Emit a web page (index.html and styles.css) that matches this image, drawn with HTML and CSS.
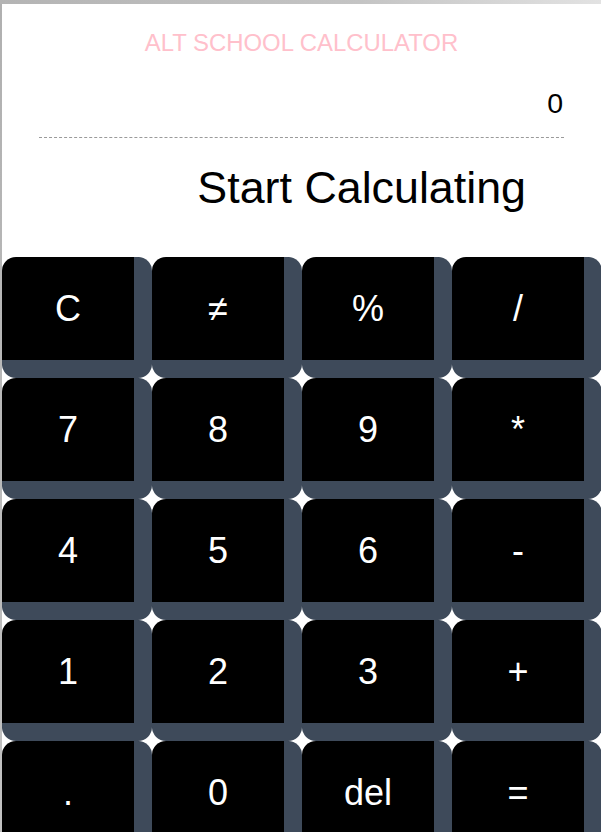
FILE: index.html
```html
<!DOCTYPE html>
<html lang="en">
<head>
<meta charset="utf-8">
<title>Alt School Calculator</title>
<link rel="stylesheet" href="styles.css">
</head>
<body>
<div class="page">
  <h1 class="title">ALT SCHOOL CALCULATOR</h1>
  <div class="display">
    <div class="value">0</div>
  </div>
  <div class="result">Start Calculating</div>
  <div class="keys">
    <button class="key">C</button>
    <button class="key">≠</button>
    <button class="key">%</button>
    <button class="key">/</button>
    <button class="key">7</button>
    <button class="key">8</button>
    <button class="key">9</button>
    <button class="key">*</button>
    <button class="key">4</button>
    <button class="key">5</button>
    <button class="key">6</button>
    <button class="key">-</button>
    <button class="key">1</button>
    <button class="key">2</button>
    <button class="key">3</button>
    <button class="key">+</button>
    <button class="key">.</button>
    <button class="key">0</button>
    <button class="key">del</button>
    <button class="key">=</button>
  </div>
</div>
</body>
</html>
```
FILE: styles.css
```css
html, body {
  margin: 0;
  padding: 0;
  overflow: hidden;
}
body {
  background:
    linear-gradient(to right, #b4b4b4, #c4c4c4 60%, #e2e2e2) top left / 100% 4px no-repeat,
    linear-gradient(to bottom, #b0b0b0, #c2c2c2) left top / 2px 100% no-repeat,
    #ffffff;
  font-family: "Liberation Sans", Arial, sans-serif;
  height: 832px;
}
.page {
  margin: 4px 0 0 2px;
  background: #ffffff;
  height: 828px;
  overflow: hidden;
}
.title {
  margin: 25px 0 0 0;
  text-align: center;
  color: #ffc0cb;
  font-size: 23.9px;
  font-weight: normal;
  line-height: 28px;
}
.display {
  margin: 30px 37px 0 37px;
  border-bottom: 1px dashed #9a9a9a;
  padding-bottom: 18px;
}
.value {
  text-align: right;
  font-size: 28.5px;
  line-height: 32px;
  padding-right: 1px;
  color: #000;
}
.result {
  margin: 22px 75px 0 37px;
  text-align: right;
  font-size: 44.8px;
  line-height: 54px;
  color: #000;
}
.keys {
  margin-top: 43px;
  display: grid;
  grid-template-columns: repeat(4, 150px);
  grid-auto-rows: 121px;
  width: 600px;
}
.key {
  background: #000;
  color: #fff;
  border: 0;
  border-right: 18px solid #3e4a5a;
  border-bottom: 18px solid #3e4a5a;
  border-radius: 14px;
  font-family: "Liberation Sans", Arial, sans-serif;
  font-size: 36px;
  padding: 0;
  margin: 0;
  display: flex;
  align-items: center;
  justify-content: center;
}
```
